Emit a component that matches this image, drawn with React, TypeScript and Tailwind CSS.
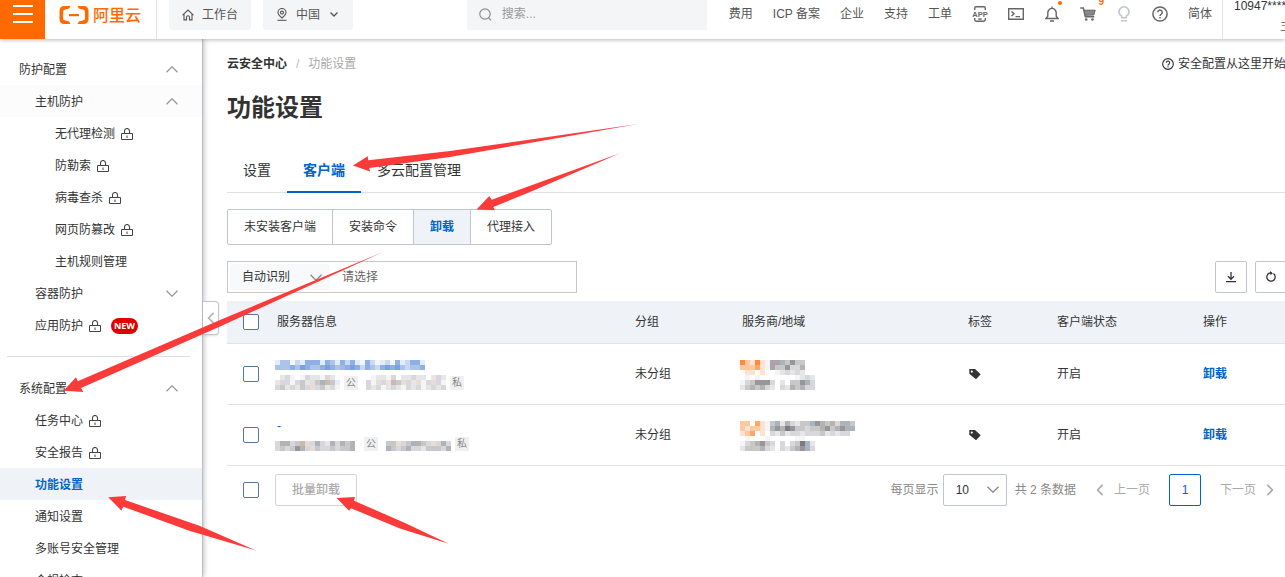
import type { ReactNode } from "react";

/* ---------- icons ---------- */

type IconProps = { className?: string };

function Chevron({ className = "" }: IconProps) {
  return (
    <svg viewBox="0 0 12 7" fill="none" stroke="currentColor" className={`h-[7px] w-3 shrink-0 ${className}`} aria-hidden="true">
      <path d="M0.5 0.7 6 6.2 11.5 0.7" strokeWidth="1.3" />
    </svg>
  );
}

function SideChevron({ className = "" }: IconProps) {
  return (
    <svg viewBox="0 0 8 14" fill="none" stroke="currentColor" className={`h-3 w-2 shrink-0 ${className}`} aria-hidden="true">
      <path d="M7 1 1.2 7 7 13" strokeWidth="1.9" />
    </svg>
  );
}

function LockIcon() {
  return (
    <svg viewBox="0 0 12 12" fill="none" stroke="#444" className="mt-px h-3 w-3 shrink-0" aria-label="未开通">
      <path d="M0.5 5.5h11v6H0.5z" />
      <path d="M3.5 5.500V3a2.500 2.500 0 0 1 5 0v2.500" strokeWidth="1.1" />
      <path d="M6 7.500v2.500" />
    </svg>
  );
}

function BrandIcon() {
  return (
    <svg viewBox="0 0 30 18" className="h-[18px] w-[30px] shrink-0" fill="#ff6a00" aria-hidden="true">
      <path d="M11.500 0H5.400C2.400 0 0.500 2 0.500 4.800v8.400C0.500 16 2.400 18 5.400 18h6.100l-1.400-2.500-4.500-1.200c-1-.3-1.500-1-1.500-1.900V5.600c0-.9.500-1.600 1.500-1.900l4.500-1.200z" />
      <path d="M18.500 0h6.100c3 0 4.900 2 4.900 4.800v8.400c0 2.800-1.900 4.800-4.900 4.800h-6.100l1.400-2.500 4.500-1.200c1-.3 1.500-1 1.500-1.900V5.600c0-.9-.5-1.600-1.500-1.900l-4.500-1.200z" />
      <path d="M10 8h10v2.200H10z" />
    </svg>
  );
}

function HomeIcon() {
  return (
    <svg viewBox="0 0 12 12" fill="none" stroke="#555" strokeWidth="1.1" className="h-3 w-3" aria-hidden="true">
      <path d="M0.600 6.200 6 1l5.400 5.200M2 5.200v5.700h2.500V8.300a1.500 1.500 0 0 1 3 0v2.600H10V5.200" />
    </svg>
  );
}

function PinIcon() {
  return (
    <svg viewBox="0 0 12 13" fill="none" stroke="#555" strokeWidth="1.1" className="h-[13px] w-3" aria-hidden="true">
      <path d="M6 10C3.500 8 2 6.300 2 4.500a4 4 0 0 1 8 0C10 6.300 8.500 8 6 10z" />
      <circle cx="6" cy="4.600" r="1.500" />
      <path d="M1.500 12.300h9" />
    </svg>
  );
}

function SearchIcon() {
  return (
    <svg viewBox="0 0 13 13" fill="none" stroke="#8c8c8c" strokeWidth="1.200" className="h-[13px] w-[13px] shrink-0" aria-hidden="true">
      <circle cx="6" cy="6" r="5.200" />
      <path d="m9.400 9.600 2.600 2.700" />
    </svg>
  );
}

function HelpIcon({ className = "" }: IconProps) {
  return (
    <svg viewBox="0 0 16 16" fill="none" stroke="currentColor" strokeWidth="1.500" className={`shrink-0 ${className}`} aria-hidden="true">
      <circle cx="8" cy="8" r="7.100" />
      <path d="M5.800 6.300a2.200 2.200 0 1 1 3.500 1.800C8.400 8.700 8 9 8 10" />
      <path d="M8 11v1.500" />
    </svg>
  );
}

function AppIcon() {
  return (
    <svg viewBox="0 0 16 16" className="h-4 w-4 overflow-visible" fill="none" stroke="#666" strokeWidth="1.400" aria-hidden="true">
      <path d="M2.700 4V2.200C2.700 1.300 3.300.8 4.100.8h7.800c.8 0 1.400.5 1.400 1.400V4M2.700 12v1.800c0 .9.600 1.400 1.400 1.400h7.800c.8 0 1.400-.5 1.400-1.400V12M6.300 13h3.400" />
      <text x="8" y="10.600" textAnchor="middle" fontSize="7.500" fontWeight="700" fontFamily="Liberation Sans" fill="#666" stroke="none">
        APP
      </text>
    </svg>
  );
}

function TerminalIcon() {
  return (
    <svg viewBox="0 0 16 12" className="h-3 w-4" fill="none" stroke="#666" strokeWidth="1.400" aria-hidden="true">
      <path d="M0.700 0.700h14.600v10.600H0.700zM3.500 3.500 6 5.800 3.500 8.100M7.500 8.600h4.500" />
    </svg>
  );
}

function BellIcon() {
  return (
    <svg viewBox="0 0 14 16" className="h-4 w-3.5" fill="none" stroke="#666" strokeWidth="1.400" aria-hidden="true">
      <path d="M7 0.500v2M1 12.500h12l-1.800-2.200V6.600a4.200 4.200 0 0 0-8.400 0v3.700zM5 15h4" />
    </svg>
  );
}

function CartIcon() {
  return (
    <svg viewBox="0 0 16 14" className="h-3.5 w-4" fill="none" stroke="#666" strokeWidth="1.400" aria-hidden="true">
      <path d="M0.300 1h3l2 8.800h9" />
      <path d="M4 3.200h11.200L13.800 8 5 8.300z" fill="#888" strokeWidth="1" />
      <circle cx="6.200" cy="12.500" r="1.300" fill="#666" stroke="none" />
      <circle cx="12.500" cy="12.500" r="1.300" fill="#666" stroke="none" />
    </svg>
  );
}

function BulbIcon() {
  return (
    <svg viewBox="0 0 14 16" className="h-4 w-3.5" fill="none" stroke="#c0c6cf" strokeWidth="1.600" aria-hidden="true">
      <path d="M4.800 11.800v-1.500a5 5 0 1 1 4.400 0v1.500zM4 14.800h6" />
    </svg>
  );
}

function DownloadIcon() {
  return (
    <svg viewBox="0 0 12 12" className="h-3 w-3" fill="none" stroke="#333" strokeWidth="1.300" aria-hidden="true">
      <path d="M6 1v7M3 5.300l3 3 3-3M1 10.600h10" />
    </svg>
  );
}

function RefreshIcon() {
  return (
    <svg viewBox="0 0 12 12" className="h-3 w-3" fill="none" stroke="#333" strokeWidth="1.300" aria-hidden="true">
      <path d="M8.500 2.600a4.200 4.200 0 1 1-4.300-.4L6.500 2" />
      <path d="M5 0 7.800 2.200 5.500 4.300z" fill="#333" stroke="none" />
    </svg>
  );
}

function TagIcon() {
  return (
    <svg viewBox="0 0 12 12" className="ml-px h-3 w-3" aria-label="标签">
      <path fillRule="evenodd" fill="#333" d="M0.300 1h5.700l5.700 5.300L7 11.200 0.300 5.800zM2.800 2.500a1.100 1.100 0 1 0 0 2.200 1.100 1.100 0 0 0 0-2.200z" />
    </svg>
  );
}

/* ---------- masked values ---------- */

const PALETTE: Record<string, string> = {
  a: "#7ba0dc", b: "#8fb0e2", c: "#adc4ea", d: "#c9d9f2", e: "#e3ecf9", f: "#a9b4e0",
  "1": "#f5f5f5", "2": "#e6e6e8", "3": "#d8d8da", "4": "#c8c8cb", "5": "#b3b3b6", "6": "#97979b", "7": "#7c7c80",
  p: "#dcd4e0", t: "#cbb9ae", g: "#c6c9bd", s: "#a8b5bf", i: "#e8ddd4", m: "#b0a0ab",
  q: "#ffa766", r: "#ffc9a0", u: "#ffe2cf", o: "#ff8a3c",
};

function Mosaic({ rows }: { rows: string[] }) {
  return (
    <svg width={rows[0].length * 5} height={rows.length * 5} shapeRendering="crispEdges" className="shrink-0" aria-hidden="true">
      {rows.flatMap((row, y) =>
        [...row].map((cell, x) =>
          PALETTE[cell] ? <rect key={`${x}-${y}`} x={x * 5} y={y * 5} width="5" height="5" fill={PALETTE[cell]} /> : null
        )
      )}
    </svg>
  );
}

function NetTag({ children }: { children: ReactNode }) {
  return <span className="h-3.5 w-3.5 bg-[#f0f0f0] text-center text-[10px] leading-[14px] text-[#888]">{children}</span>;
}

/* ---------- header ---------- */

const NAV = ["费用", "ICP 备案", "企业", "支持", "工单"];

function IconButton({ label, children }: { label: string; children: ReactNode }) {
  return (
    <button type="button" aria-label={label} className="relative flex h-7 w-9 items-center justify-center text-[#666]">
      {children}
    </button>
  );
}

function Header() {
  return (
    <header className="relative z-20 flex h-[39px] shrink-0 bg-white text-[#555] shadow-[0_1px_4px_rgba(0,0,0,0.28)]">
      <button type="button" aria-label="菜单" className="flex w-[45px] shrink-0 flex-col items-center gap-1.5 bg-[#ff6a00] pt-[5px]">
        <span className="h-0.5 w-5 bg-white" />
        <span className="h-0.5 w-5 bg-white" />
        <span className="h-0.5 w-5 bg-white" />
      </button>
      <a href="#home" className="flex shrink-0 gap-1 border-r border-[#e3e4e6] pr-[15px] pl-3.5 text-base leading-8 font-medium whitespace-nowrap text-[#ff6a00]">
        <span className="pt-1.5">
          <BrandIcon />
        </span>
        阿里云
      </a>
      <div className="ml-3 flex h-[30px] shrink-0 gap-3 leading-7">
        <button type="button" className="flex items-center gap-2 rounded-b-sm bg-[#f4f5f7] px-[13px] pb-px">
          <HomeIcon />
          工作台
        </button>
        <button type="button" className="flex items-center gap-2 rounded-b-sm bg-[#f4f5f7] pr-[15px] pl-[13px] pb-px">
          <PinIcon />
          中国
          <svg viewBox="0 0 8 5" fill="none" stroke="#555" strokeWidth="1.300" className="ml-0.5 h-[5px] w-2" aria-hidden="true">
            <path d="M0.500 0.500 4 4 7.500 0.500" />
          </svg>
        </button>
      </div>
      <label className="ml-auto flex h-[30px] w-60 items-center gap-2.5 bg-[#f4f5f7] px-3 pb-0.5">
        <SearchIcon />
        <input type="search" aria-label="搜索" placeholder="搜索..." className="min-w-0 flex-1 bg-transparent leading-7 outline-none placeholder:text-[#999]" />
      </label>
      <nav className="ml-[22px] flex shrink-0 gap-5 leading-7 whitespace-nowrap">
        {NAV.map((item) => (
          <a key={item} href="#nav">
            {item}
          </a>
        ))}
      </nav>
      <div className="ml-2.5 flex shrink-0">
        <IconButton label="APP">
          <AppIcon />
        </IconButton>
        <IconButton label="命令行">
          <TerminalIcon />
        </IconButton>
        <IconButton label="消息">
          <BellIcon />
          <span className="absolute top-px right-2 h-1 w-1 rounded-full bg-[#ff6a00]" />
        </IconButton>
        <IconButton label="购物车">
          <CartIcon />
          <span className="absolute -top-1 right-0.5 text-[10px] leading-3 font-bold text-[#ff6a00]">9</span>
        </IconButton>
        <IconButton label="提示">
          <BulbIcon />
        </IconButton>
        <IconButton label="帮助">
          <HelpIcon className="h-4 w-4" />
        </IconButton>
      </div>
      <a href="#lang" className="ml-2.5 shrink-0 leading-7">
        简体
      </a>
      <div className="ml-2.5 flex w-[63px] shrink-0 flex-col overflow-hidden border-l border-[#e3e4e6] pl-[11px] text-[#333]">
        <span className="leading-3 whitespace-nowrap">10947****</span>
        <span className="pt-1 pl-[46px] leading-5 whitespace-nowrap text-[#777]">主账号</span>
      </div>
    </header>
  );
}

/* ---------- sidebar ---------- */

type Item = { label: string; level: 0 | 1 | 2; lock?: boolean; isNew?: boolean; fold?: "up" | "down"; active?: boolean; shade?: boolean };

const PROTECTION: Item[] = [
  { label: "防护配置", level: 0, fold: "up" },
  { label: "主机防护", level: 1, fold: "up", shade: true },
  { label: "无代理检测", level: 2, lock: true },
  { label: "防勒索", level: 2, lock: true },
  { label: "病毒查杀", level: 2, lock: true },
  { label: "网页防篡改", level: 2, lock: true },
  { label: "主机规则管理", level: 2 },
  { label: "容器防护", level: 1, fold: "down" },
  { label: "应用防护", level: 1, lock: true, isNew: true },
];

const SYSTEM: Item[] = [
  { label: "系统配置", level: 0, fold: "up" },
  { label: "任务中心", level: 1, lock: true },
  { label: "安全报告", level: 1, lock: true },
  { label: "功能设置", level: 1, active: true },
  { label: "通知设置", level: 1 },
  { label: "多账号安全管理", level: 1 },
  { label: "合规检查", level: 1 },
];

const INDENT = ["pl-[19px]", "pl-[35px]", "pl-[55px]"];

function MenuItem({ item }: { item: Item }) {
  const tone = item.active ? "bg-[#eff3f8] font-bold text-[#0064c8]" : item.shade ? "bg-[#fcfcfc]" : "";
  return (
    <li>
      <a href="#menu" className={`flex h-8 items-center pt-px pr-6 ${INDENT[item.level]} ${tone}`}>
        <span className="mr-1.5">{item.label}</span>
        {item.lock && <LockIcon />}
        {item.isNew && (
          <span className="ml-2.5 h-4 rounded-full bg-[#e00000] px-[3px] font-['Open_Sans'] text-[9px] leading-4 font-bold text-white">NEW</span>
        )}
        {item.fold && <Chevron className={`ml-auto text-[#999] ${item.fold === "up" ? "rotate-180" : ""}`} />}
      </a>
    </li>
  );
}

function Sidebar() {
  return (
    <aside className="relative z-10 w-[203px] shrink-0 border-r border-[#b9bec6] bg-white pt-3.5 shadow-[1px_0_5px_rgba(0,0,0,0.25)]">
      <ul>
        {PROTECTION.map((item) => (
          <MenuItem key={item.label} item={item} />
        ))}
      </ul>
      <hr className="my-[15px] mr-3 ml-[7px] border-[#dedede]" />
      <ul>
        {SYSTEM.map((item) => (
          <MenuItem key={item.label} item={item} />
        ))}
      </ul>
      <button
        type="button"
        aria-label="收起菜单"
        className="absolute top-[262px] left-full ml-px flex h-[34px] w-4 items-center justify-center rounded-r-sm border border-l-0 border-[#c0c6cf] bg-white text-[#b3b3b3] shadow-sm"
      >
        <SideChevron />
      </button>
    </aside>
  );
}

/* ---------- main ---------- */

function Check({ label }: { label: string }) {
  return (
    <input type="checkbox" aria-label={label} className="ml-4 block h-4 w-4 shrink-0 appearance-none rounded-xs border border-[#557799] bg-white checked:bg-[#0064c8]" />
  );
}

const MODES = ["未安装客户端", "安装命令", "卸载", "代理接入"];

type Server = { id: string; name: ReactNode; publicIp: string[]; privateIp: string[]; logo: string[]; vendor: string[]; region: string[]; zone: string[] };

const SERVERS: Server[] = [
  {
    id: "1",
    name: <Mosaic rows={["ecc1debbbebcebdbe1bd1ed1bedbbe", "cccbcabccbabcfbabdbcdbabacdccb"]} />,
    publicIp: [" 231 1322132 ", "2p31342i4st4e", "3423243i34231"],
    privateIp: [" 12213 22322 232", "p1i32t4i32i13ip1", "3231232132312323"],
    logo: ["oruou1", "rrrqu1", " uu u "],
    vendor: ["mmsg644", "mg46335", " 123232"],
    region: [" 1 1   ", "13g6663", "2454532"],
    zone: ["   1232", "2 446s3", "32545p3"],
  },
  {
    id: "2",
    name: <span className="ml-0.5 leading-[10px] text-[#0064c8]">-</span>,
    publicIp: ["                 ", "35534ti3s3253545 ", "3434653i43343445 "],
    privateIp: ["             ", "4gi34s5g3i353", "s434533244435"],
    logo: ["rr qu1", "rurru1", "urq u "],
    vendor: ["4s253244s65g535s4", "5657644344564565s", "3242332333423233 "],
    region: [" 1   1 ", "13g5643", "24g4532"],
    zone: ["   11  ", "3 347s2", "32456s3"],
  },
];

function ServerTable() {
  return (
    <table className="w-full table-fixed border-collapse text-left">
      <colgroup>
        <col className="w-[50px]" />
        <col />
        <col className="w-[107px]" />
        <col className="w-[226px]" />
        <col className="w-[89px]" />
        <col className="w-[146px]" />
        <col className="w-[82px]" />
      </colgroup>
      <thead>
        <tr className="h-[42px] border-b border-[#dfe1e4] bg-[#eff3f8]">
          <th>
            <Check label="全选" />
          </th>
          {["服务器信息", "分组", "服务商/地域", "标签", "客户端状态", "操作"].map((title) => (
            <th key={title} className="font-normal">
              {title}
            </th>
          ))}
        </tr>
      </thead>
      <tbody>
        {SERVERS.map((s) => (
          <tr key={s.id} className="h-[61px] border-b border-[#dfe1e4]">
            <td>
              <Check label={`选择服务器 ${s.id}`} />
            </td>
            <td className="pt-4 align-top">
              <div className="-ml-0.5 flex h-2.5 items-center">{s.name}</div>
              <div className="mt-[5px] -ml-0.5 flex h-[15px] items-end gap-1">
                <Mosaic rows={s.publicIp} />
                <NetTag>公</NetTag>
                <span />
                <Mosaic rows={s.privateIp} />
                <NetTag>私</NetTag>
              </div>
            </td>
            <td>未分组</td>
            <td className="pt-4 align-top">
              <div className="-ml-0.5 flex h-[15px]">
                <Mosaic rows={s.logo} />
                <Mosaic rows={s.vendor} />
              </div>
              <div className="-ml-0.5 flex gap-[5px]">
                <Mosaic rows={s.region} />
                <Mosaic rows={s.zone} />
              </div>
            </td>
            <td>
              <TagIcon />
            </td>
            <td>开启</td>
            <td>
              <a href="#uninstall" className="font-bold text-[#0064c8]">
                卸载
              </a>
            </td>
          </tr>
        ))}
      </tbody>
    </table>
  );
}

function Main() {
  return (
    <main className="min-w-0 flex-1 overflow-hidden pl-6">
      <div className="flex h-[50px] items-center whitespace-nowrap">
        <a href="#center" className="font-bold">
          云安全中心
        </a>
        <span className="px-[9px] text-[#bbb]">/</span>
        <span className="text-[#aaa]">功能设置</span>
        <a href="#guide" className="-mr-px ml-auto flex items-center gap-1">
          <HelpIcon className="h-3 w-3" />
          安全配置从这里开始
        </a>
      </div>
      <h1 className="text-2xl leading-[38px] font-bold">功能设置</h1>
      <div role="tablist" className="mt-5 flex h-[46px] border-b border-[#dfe1e4] text-sm leading-[46px]">
        <button type="button" role="tab" className="px-4">
          设置
        </button>
        <button type="button" role="tab" aria-selected="true" className="h-[46px] border-b-2 border-[#0064c8] px-4 font-bold text-[#0064c8]">
          客户端
        </button>
        <button type="button" role="tab" className="px-4">
          多云配置管理
        </button>
      </div>
      <div className="mt-4 flex w-fit divide-x divide-[#c0c6cf] rounded-xs border border-[#c0c6cf]">
        {MODES.map((mode) => (
          <button key={mode} type="button" className={`h-[34px] px-4 ${mode === "卸载" ? "bg-[#eff3f8] font-bold text-[#0064c8]" : ""}`}>
            {mode}
          </button>
        ))}
      </div>
      <div className="mt-4 flex justify-between">
        <div className="flex h-8 w-[350px] items-center border border-[#c8c8c8] pl-0.5">
          <div className="relative flex items-center">
            <select aria-label="筛选条件" className="h-[26px] w-[100px] appearance-none rounded-sm bg-[#f7f9fa] pl-3 outline-none">
              <option>自动识别</option>
            </select>
            <Chevron className="pointer-events-none absolute right-2 text-[#888]" />
          </div>
          <input aria-label="筛选值" placeholder="请选择" className="min-w-0 flex-1 px-3 outline-none placeholder:text-[#666]" />
        </div>
        <div className="-mr-0.5 flex gap-2">
          <button type="button" aria-label="下载" className="flex h-8 w-8 items-center justify-center rounded-xs border border-[#c0c6cf]">
            <DownloadIcon />
          </button>
          <button type="button" aria-label="刷新" className="flex h-8 w-8 items-center justify-center rounded-xs border border-[#c0c6cf]">
            <RefreshIcon />
          </button>
        </div>
      </div>
      <div className="mt-2">
        <ServerTable />
      </div>
      <div className="flex items-center pt-2 pr-[11px] whitespace-nowrap text-[#888]">
        <Check label="选择全部" />
        <button type="button" disabled className="ml-4 h-8 rounded-xs border border-[#d0d3d8] px-4 font-medium text-[#aaa]">
          批量卸载
        </button>
        <label htmlFor="page-size" className="mr-1 ml-auto">
          每页显示
        </label>
        <div className="relative flex items-center">
          <select id="page-size" className="h-8 w-16 appearance-none rounded-xs border border-[#c0c6cf] pl-3 text-[#333] outline-none">
            <option>10</option>
          </select>
          <Chevron className="pointer-events-none absolute right-2 text-[#888]" />
        </div>
        <span className="ml-2">共 2 条数据</span>
        <button type="button" className="ml-5 flex items-center gap-2.5 text-[#aaa]">
          <SideChevron />
          上一页
        </button>
        <button type="button" aria-current="page" className="mx-[19px] h-8 w-8 rounded-xs border border-[#0064c8] text-[#0064c8]">
          1
        </button>
        <button type="button" className="flex items-center gap-2.5 text-[#aaa]">
          下一页
          <SideChevron className="rotate-180" />
        </button>
      </div>
    </main>
  );
}

/* ---------- annotation arrows ---------- */

const ARROWS = [
  "353,165.500 367.700,156.300 368.300,160.300 450,151 638,124 450,157 369.300,168 370,171.500",
  "476.500,209.500 489.300,196 491.700,199.700 620,153.300 530,192 493.300,207 495,210.300",
  "63.500,390.700 76,377.300 77.700,381.300 220,320 383,252 220,326.500 81,388 83.300,392",
  "108.300,497.300 126,496 125,500 200,526 256.500,550.700 190,531 123.300,506.700 121.300,510.500",
  "336.700,498 355,497 354,500.700 405,523 448.700,543.700 400,528.500 351,508.300 349,510.700",
];

function Arrows() {
  return (
    <svg width="1285" height="577" className="pointer-events-none absolute top-0 left-0 z-30" fill="#fb3a3a" aria-hidden="true">
      {ARROWS.map((points) => (
        <polygon key={points} points={points} />
      ))}
    </svg>
  );
}

export default function App() {
  return (
    <div className="relative flex h-screen flex-col overflow-hidden bg-white font-['Liberation_Sans','Noto_Sans_CJK_SC',sans-serif] text-xs text-[#333]">
      <Header />
      <div className="flex min-h-0 flex-1">
        <Sidebar />
        <Main />
      </div>
      <Arrows />
    </div>
  );
}
